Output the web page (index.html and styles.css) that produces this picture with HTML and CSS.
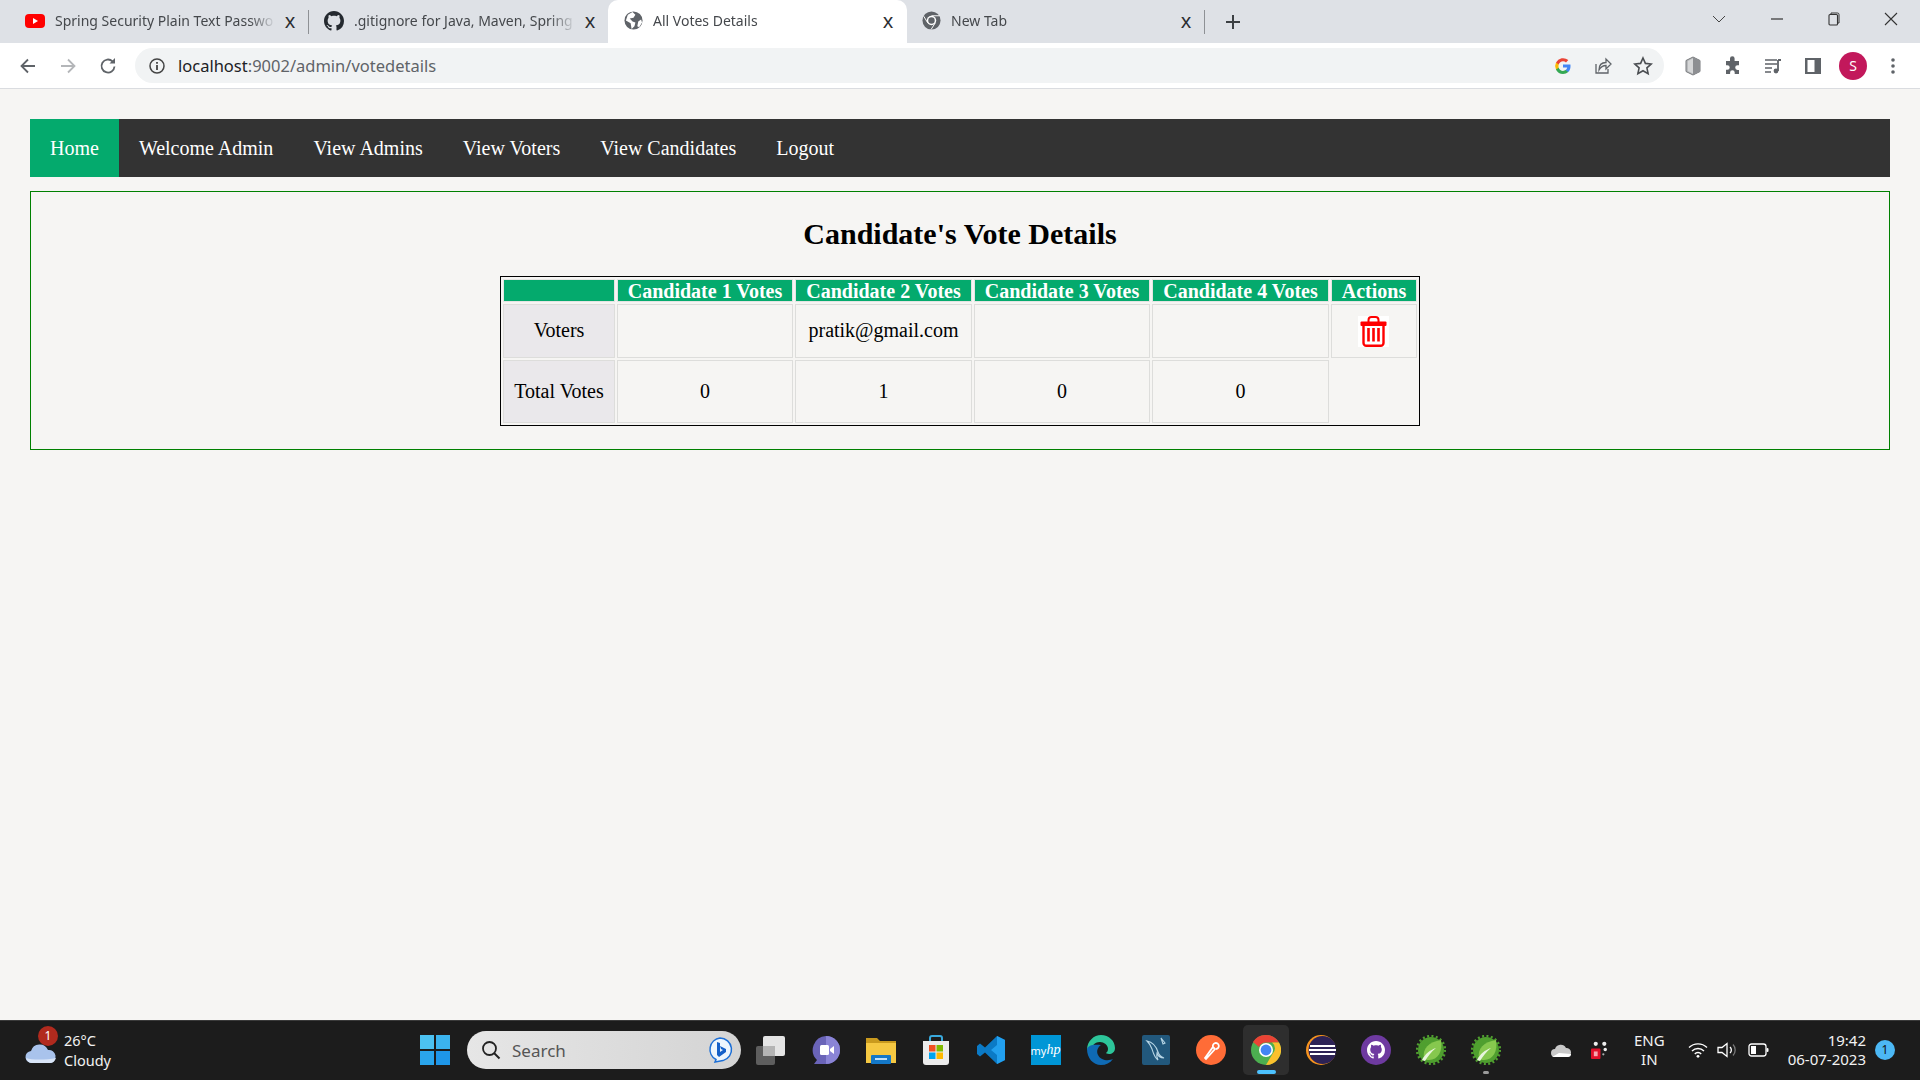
FILE: index.html
```html
<!DOCTYPE html>
<html lang="en">
<head>
<meta charset="UTF-8">
<title>All Votes Details</title>
<link rel="stylesheet" href="styles.css">
</head>
<body>
<svg class="defs" width="0" height="0">
    <defs>
        <path id="gh" d="M8 0C3.58 0 0 3.58 0 8c0 3.54 2.29 6.53 5.47 7.59.4.07.55-.17.55-.38 0-.19-.01-.82-.01-1.49-2.01.37-2.53-.49-2.69-.94-.09-.23-.48-.94-.82-1.13-.28-.15-.68-.52-.01-.53.63-.01 1.08.58 1.23.82.72 1.21 1.87.87 2.33.66.07-.52.28-.87.51-1.07-1.78-.2-3.64-.89-3.64-3.95 0-.87.31-1.59.82-2.15-.08-.2-.36-1.02.08-2.12 0 0 .67-.21 2.2.82.64-.18 1.32-.27 2-.27.68 0 1.36.09 2 .27 1.53-1.04 2.2-.82 2.2-.82.44 1.1.16 1.92.08 2.12.51.56.82 1.27.82 2.15 0 3.07-1.87 3.75-3.65 3.95.29.25.54.73.54 1.48 0 1.07-.01 1.93-.01 2.2 0 .21.15.46.55.38A8.013 8.013 0 0016 8c0-4.42-3.58-8-8-8z"/>
        <g id="spring">
            <circle cx="15" cy="15" r="13" fill="#4f9f2f"/>
            <circle cx="15" cy="15" r="14" fill="none" stroke="#4f9f2f" stroke-width="2.500" stroke-dasharray="2 2.400"/>
            <path d="M8 24C6 13 13 7 25 5c2 11-3 20-12 20-2 0-4-.4-5-1z" fill="#86c84e"/>
            <path d="M6 25c3-6 8-10 14-12-5 4-8 8-11 13z" fill="#e8f5dc"/>
        </g>
    </defs>
</svg>

<div class="tab-strip">
    <div class="tab">
        <svg class="favicon" viewBox="0 0 20 20"><rect y="3" width="20" height="14" rx="4" fill="#f00"/><path d="M8 7l5 3-5 3z" fill="#fff"/></svg>
        <span class="tab-title">Spring Security Plain Text Passwo</span>
        <span class="tab-close">x</span>
    </div>
    <div class="tab-sep"></div>
    <div class="tab">
        <svg class="favicon" viewBox="0 0 16 16" fill="#24292f"><use href="#gh"/></svg>
        <span class="tab-title">.gitignore for Java, Maven, Spring</span>
        <span class="tab-close">x</span>
    </div>
    <div class="tab tab-active">
        <svg class="favicon favicon-sm" viewBox="0 0 20 20"><circle cx="10" cy="10" r="9.5" fill="#5f6368"/><path d="M9 1l3 3-2 3-4 1 3 3 3 1-1 4-3 3-1-6-5-3 2-6zM15 11l3-2 1 3-3 5-2-1z" fill="#fff"/></svg>
        <span class="tab-title">All Votes Details</span>
        <span class="tab-close">x</span>
    </div>
    <div class="tab tab-new">
        <svg class="favicon favicon-sm" viewBox="0 0 20 20"><circle cx="10" cy="10" r="9.5" fill="#5f6368"/><circle cx="10" cy="10" r="5" fill="#fff"/><circle cx="10" cy="10" r="3.4" fill="#5f6368"/><path d="M10 5h8.5M6 12.5L1.8 5.5M14 12.5L9.5 19.5" stroke="#fff" stroke-width="1"/></svg>
        <span class="tab-title">New Tab</span>
        <span class="tab-close">x</span>
    </div>
    <div class="tab-sep"></div>
    <svg class="new-tab" viewBox="0 0 16 16"><path d="M8 1v14M1 8h14" stroke="#3c4043" stroke-width="2"/></svg>
    <div class="window-controls">
        <svg class="win-chevron" viewBox="0 0 14 8"><path d="M1 1l6 6 6-6" fill="none" stroke="#444" stroke-width="1"/></svg>
        <svg class="win-min" viewBox="0 0 12 12"><path d="M0 6h12" stroke="#333" stroke-width="1.2"/></svg>
        <svg class="win-max" viewBox="0 0 12 14"><path d="M3 2.500V1h6.500a1.500 1.500 0 0 1 1.500 1.500V11H9.500" fill="none" stroke="#333"/><rect x="1" y="2.500" width="8.500" height="10.500" rx="1" fill="none" stroke="#333" stroke-width="1.100"/></svg>
        <svg class="win-close" viewBox="0 0 14 14"><path d="M1 1l12 12M13 1L1 13" stroke="#333" stroke-width="1.100"/></svg>
    </div>
</div>

<div class="toolbar">
    <svg class="nav-btn" viewBox="0 0 20 20"><path d="M17 10H4M10 3.500L3.500 10l6.500 6.500" fill="none" stroke="#5f6368" stroke-width="1.800"/></svg>
    <svg class="nav-btn" viewBox="0 0 20 20"><path d="M3 10h13M10 3.500l6.500 6.500-6.500 6.500" fill="none" stroke="#b4b6b9" stroke-width="1.800"/></svg>
    <svg class="nav-btn" viewBox="0 0 20 20"><path d="M16.500 10.500a6.500 6.500 0 1 1-2-5.200" fill="none" stroke="#5f6368" stroke-width="1.800"/><path d="M17 2v5.500h-5.500z" fill="#5f6368"/></svg>
    <div class="omnibox">
        <svg class="info-icon" viewBox="0 0 16 16"><circle cx="8" cy="8" r="7" fill="none" stroke="#444" stroke-width="1.500"/><path d="M8 7v5M8 4v1.800" stroke="#444" stroke-width="1.800"/></svg>
        <span class="url"><span class="url-host">localhost</span>:9002/admin/votedetails</span>
        <div class="omni-actions">
            <svg class="tool-icon" viewBox="0 0 20 20"><path d="M17.500 10.200c0-.6 0-1.100-.1-1.600H10v3h4.200a3.600 3.600 0 0 1-1.600 2.400v2h2.600c1.500-1.400 2.300-3.400 2.300-5.800z" fill="#4285f4"/><path d="M10 18c2.100 0 3.900-.7 5.200-1.900l-2.600-2c-.7.500-1.600.8-2.600.8-2 0-3.700-1.400-4.300-3.200H3v2.100A8 8 0 0 0 10 18z" fill="#34a853"/><path d="M5.700 11.700a4.800 4.800 0 0 1 0-3.100V6.400H3a8 8 0 0 0 0 7.200z" fill="#fbbc05"/><path d="M10 5.200c1.200 0 2.200.4 3 1.200l2.300-2.300A8 8 0 0 0 3 6.400l2.700 2.200C6.300 6.700 8 5.200 10 5.200z" fill="#ea4335"/></svg>
            <svg class="tool-icon" viewBox="0 0 20 20"><path d="M3 8v9h12v-4" fill="none" stroke="#5f6368" stroke-width="1.300"/><path d="M6 14c0-5 3-7.500 7-7.500V3l5 5-5 5V9.500c-3 0-5 1-7 4.500z" fill="none" stroke="#5f6368" stroke-width="1.300"/></svg>
            <svg class="tool-icon" viewBox="0 0 20 20"><path d="M10 2l2.400 5.400 5.800.6-4.300 3.900 1.200 5.700L10 14.700l-5.100 2.900 1.200-5.700L1.800 8l5.800-.6z" fill="none" stroke="#4a4d51" stroke-width="1.600"/></svg>
        </div>
    </div>
    <div class="toolbar-actions">
        <svg class="tool-icon" viewBox="0 0 20 20"><path d="M10 1l7 3.500v11L10 19l-7-3.500v-11z" fill="#b9bbbd" stroke="#77797c"/><path d="M10 1v18l7-3.500v-11z" fill="#8d8f92"/><path d="M5 5l5-2.500v15L5 15z" fill="#d6d7d8"/></svg>
        <svg class="tool-icon" viewBox="0 0 20 20"><path d="M7 2.500a2.300 2.300 0 0 1 4.600 0V5H16v4.300h-1.500a2.300 2.300 0 0 0 0 4.600H16V18h-4.300v-1.500a2.300 2.300 0 0 0-4.600 0V18H3v-4.200h1.400a2.300 2.300 0 0 0 0-4.600H3V5h4z" fill="#5f6368"/></svg>
        <svg class="tool-icon" viewBox="0 0 20 20"><path d="M2 4h12M2 8h12M2 12h7M2 16h6" stroke="#5f6368" stroke-width="1.600"/><path d="M15 4h3M15 4v11" stroke="#5f6368" stroke-width="1.800" fill="none"/><circle cx="13" cy="15" r="2.400" fill="#5f6368"/></svg>
        <svg class="tool-icon" viewBox="0 0 20 20"><rect x="2" y="2" width="16" height="16" fill="#5f6368"/><rect x="4.500" y="4" width="7" height="12" fill="#fff"/></svg>
        <span class="avatar">S</span>
        <svg class="tool-icon" viewBox="0 0 20 20" fill="#5f6368"><circle cx="10" cy="4" r="1.800"/><circle cx="10" cy="10" r="1.800"/><circle cx="10" cy="16" r="1.800"/></svg>
    </div>
</div>

<div class="page">
    <ul class="topnav">
        <li class="active">Home</li>
        <li>Welcome Admin</li>
        <li>View Admins</li>
        <li>View Voters</li>
        <li>View Candidates</li>
        <li>Logout</li>
    </ul>
    <div class="content">
        <h2>Candidate's Vote Details</h2>
        <table class="votes">
            <colgroup>
                <col class="col-a"><col class="col-c"><col class="col-b"><col class="col-c"><col class="col-b"><col class="col-d">
            </colgroup>
            <tr class="head-row">
                <th></th>
                <th>Candidate 1 Votes</th>
                <th>Candidate 2 Votes</th>
                <th>Candidate 3 Votes</th>
                <th>Candidate 4 Votes</th>
                <th>Actions</th>
            </tr>
            <tr class="voter-row">
                <td class="row-label">Voters</td>
                <td></td>
                <td>pratik@gmail.com</td>
                <td></td>
                <td></td>
                <td>
                    <svg class="trash" viewBox="0 0 31 31">
                        <rect width="31" height="31" fill="#fff"/>
                        <path d="M10.500 6V4A3 3 0 0 1 13.500 1h4A3 3 0 0 1 20.500 4v2" fill="none" stroke="#f00" stroke-width="2"/>
                        <rect x="2.500" y="5.500" width="26" height="4.500" rx="1" fill="#f00"/>
                        <path d="M5.500 9v18A2.800 2.800 0 0 0 8.300 29.800h14.400a2.800 2.800 0 0 0 2.800-2.800V9" fill="none" stroke="#f00" stroke-width="2.400"/>
                        <path d="M10.500 12v13.500M15.500 12v13.500M20.500 12v13.500" stroke="#f00" stroke-width="2.600"/>
                    </svg>
                </td>
            </tr>
            <tr class="total-row">
                <td class="row-label">Total Votes</td>
                <td>0</td>
                <td>1</td>
                <td>0</td>
                <td>0</td>
            </tr>
        </table>
    </div>
</div>

<div class="taskbar">
    <div class="weather">
        <div class="weather-icon">
            <svg viewBox="0 0 32 20"><path d="M7 19a6 6 0 0 1-1-12 9 9 0 0 1 17-1 6.500 6.500 0 0 1 2 13z" fill="#a9c3ec"/><path d="M1 14c6 2 20 2 30 0-1 3-3 5-6 5H7c-3 0-5-2-6-5z" fill="#d9e5f7"/></svg>
            <span class="weather-badge">1</span>
        </div>
        <div class="weather-text">
            <span>26°C</span>
            <span>Cloudy</span>
        </div>
    </div>
    <div class="task-icons">
        <div class="task-item">
            <svg class="win-logo" viewBox="0 0 30 30"><rect width="14" height="14" fill="#4cc2f1"/><rect x="16" width="14" height="14" fill="#3bb4ee"/><rect y="16" width="14" height="14" fill="#2aa5ec"/><rect x="16" y="16" width="14" height="14" fill="#1e96e8"/></svg>
        </div>
        <div class="search-pill">
            <svg class="search-glass" viewBox="0 0 20 20"><circle cx="8.500" cy="8.500" r="6.500" fill="none" stroke="#222" stroke-width="1.800"/><path d="M13 13l5.500 5.500" stroke="#222" stroke-width="2"/></svg>
            <span class="search-text">Search</span>
            <svg class="bing" viewBox="0 0 26 26"><path d="M13 1a11.500 11.500 0 0 1 3 22.600L8 25l1-2.500A11.500 11.500 0 0 1 13 1z" fill="#eef6fd" stroke="#1d6fd6" stroke-width="1.500"/><path d="M10 5l3 1v9l3-2-2-1-1-3 6 3v3l-7 5-2-2z" fill="#1560c8"/></svg>
        </div>
        <div class="task-item">
            <svg class="task-svg" viewBox="0 0 30 30"><rect y="11" width="19" height="19" rx="2" fill="#5e5e5e"/><rect x="7" y="1" width="22" height="20" rx="2" fill="#e4e4e4"/><rect x="7" y="11" width="12" height="10" fill="#b4b4b4"/></svg>
        </div>
        <div class="task-item">
            <svg class="task-svg" viewBox="0 0 30 30"><path d="M15 1a14 14 0 0 1 0 28H3l3-4A14 14 0 0 1 15 1z" fill="#6a64b8"/><path d="M15 1a14 14 0 0 1 0 28z" fill="#8a84d6"/><rect x="9" y="10" width="9" height="10" rx="1.500" fill="#fff"/><path d="M19 14l4-3v8l-4-3z" fill="#fff"/></svg>
        </div>
        <div class="task-item">
            <svg class="task-svg" viewBox="0 0 30 30"><path d="M0 3h11l3 3h16v22H0z" fill="#c99a1e"/><rect y="8" width="30" height="20" fill="#f5c842"/><rect x="5" y="20" width="20" height="9" rx="1" fill="#1478c8"/><rect x="9" y="23" width="12" height="2" fill="#bfe0fa"/></svg>
        </div>
        <div class="task-item">
            <svg class="task-svg" viewBox="0 0 30 30"><path d="M9 6V3a2 2 0 0 1 2-2h8a2 2 0 0 1 2 2v3" fill="none" stroke="#39a9dc" stroke-width="2"/><path d="M2 6h26v21a3 3 0 0 1-3 3H5a3 3 0 0 1-3-3z" fill="#ececec"/><rect x="8" y="10" width="6.500" height="6.500" fill="#f25022"/><rect x="15.500" y="10" width="6.500" height="6.500" fill="#7fba00"/><rect x="8" y="17.500" width="6.500" height="6.500" fill="#00a4ef"/><rect x="15.500" y="17.500" width="6.500" height="6.500" fill="#ffb900"/></svg>
        </div>
        <div class="task-item">
            <svg class="task-svg" viewBox="0 0 30 30"><path d="M21 1l8 4v20l-8 4-12-11.500-5 4L1 19v-8l3-2.500 5 4z" fill="#0b7ac6"/><path d="M21 1l8 4v20l-8 4V20l-6-5 6-5z" fill="#22a0ef"/></svg>
        </div>
        <div class="task-item">
            <div class="myhp">my<i>hp</i></div>
        </div>
        <div class="task-item">
            <svg class="task-svg" viewBox="0 0 30 30"><path d="M1 15C1 6 8 0 15 0c8 0 14 6 14 13 0 4-3 6-6 6-2 0-3-1-3-1 1-1 2-2 2-4 0-4-4-7-8-7-6 0-9 5-9 8z" fill="#2dc59a"/><path d="M1 14c0 9 6 16 14 16 5 0 9-2 12-6-4 2-12 2-15-4-2-4 0-8 3-10C8 9 2 10 1 14z" fill="#0f6ab4"/></svg>
        </div>
        <div class="task-item">
            <svg class="task-svg" viewBox="0 0 30 30"><rect width="28" height="30" x="1" rx="2" fill="#22587c"/><path d="M6 6c5 1 9 5 11 11 1 3 3 5 6 6-4 0-6-2-7-5-1 3 0 5 1 7-4-3-5-8-6-11C10 11 8 8 6 6zM20 3l4 5-2 1z" fill="none" stroke="#b8d6e6" stroke-width="1.100"/></svg>
        </div>
        <div class="task-item">
            <svg class="task-svg" viewBox="0 0 30 30"><circle cx="15" cy="15" r="15" fill="#ff6c37"/><path d="M9 23l8-11 2 2-9 10zM17 12a3 3 0 1 1 3 2" fill="none" stroke="#fff" stroke-width="1.800"/></svg>
        </div>
        <div class="task-item task-running">
            <svg class="task-svg" viewBox="0 0 30 30"><circle cx="15" cy="15" r="15" fill="#4caf50"/><path d="M15 0a15 15 0 0 1 13 7.500H15A7.500 7.500 0 0 0 8 12L2 7a15 15 0 0 1 13-7z" fill="#ea4335"/><path d="M28 7.500A15 15 0 0 1 15 30l6.500-11A7.500 7.500 0 0 0 21 7.500z" fill="#fbc02d"/><circle cx="15" cy="15" r="7" fill="#fff"/><circle cx="15" cy="15" r="5.400" fill="#4285f4"/></svg>
            <span class="running-bar"></span>
        </div>
        <div class="task-item">
            <svg class="task-svg" viewBox="0 0 30 30"><circle cx="15" cy="15" r="15" fill="#f7941e"/><circle cx="16.500" cy="15" r="14" fill="#2c2255"/><path d="M4 11h25M3 15h27M4 19h25" stroke="#fff" stroke-width="2.200"/></svg>
        </div>
        <div class="task-item">
            <svg class="task-svg" viewBox="0 0 30 30"><circle cx="15" cy="15" r="15" fill="#6e3aa0"/><g transform="translate(6 6) scale(1.125)" fill="#fff"><use href="#gh"/></g></svg>
        </div>
        <div class="task-item">
            <svg class="task-svg" viewBox="0 0 30 30"><use href="#spring"/></svg>
        </div>
        <div class="task-item">
            <svg class="task-svg" viewBox="0 0 30 30"><use href="#spring"/></svg>
            <span class="open-dot"></span>
        </div>
    </div>
    <div class="tray">
        <svg class="tray-cloud" viewBox="0 0 20 13"><path d="M4 13a4 4 0 0 1 0-8 6 6 0 0 1 11-1 4.500 4.500 0 0 1 1 9z" fill="#c9c9c9"/><path d="M1 13l7-4 12 1c0 2-1 3-3 3z" fill="#fff"/></svg>
        <svg class="tray-app" viewBox="0 0 20 20"><rect x="0" y="8" width="10" height="11" rx="1" fill="#e0102a"/><rect x="3" y="11" width="4" height="5" fill="#f7a6b0"/><circle cx="5" cy="3" r="2.200" fill="#eee"/><circle cx="14" cy="3" r="2.200" fill="#eee"/><circle cx="15" cy="9" r="1.800" fill="#eee"/><circle cx="13" cy="14" r="1.200" fill="#aaa"/></svg>
        <div class="lang">
            <span>ENG</span>
            <span>IN</span>
        </div>
        <svg class="tray-wifi" viewBox="0 0 20 16"><path d="M1 5.500a13 13 0 0 1 18 0M4 9a8.500 8.500 0 0 1 12 0M6.800 12a4.200 4.200 0 0 1 6.400 0" fill="none" stroke="#fff" stroke-width="1.400"/><circle cx="10" cy="14.300" r="1.400" fill="#fff"/></svg>
        <svg class="tray-sound" viewBox="0 0 20 16"><path d="M1 5.500h4L10 1.500v13L5 10.500H1z" fill="none" stroke="#fff" stroke-width="1.300"/><path d="M13 5a4 4 0 0 1 0 6" fill="none" stroke="#fff" stroke-width="1.300"/><path d="M16 2.500a8 8 0 0 1 0 11" fill="none" stroke="#777" stroke-width="1.300"/></svg>
        <svg class="tray-battery" viewBox="0 0 21 14"><rect x="1" y="1" width="17" height="12" rx="2.500" fill="none" stroke="#fff" stroke-width="1.300"/><rect x="3" y="3" width="5" height="8" fill="#fff"/><rect x="18.500" y="5" width="2" height="4" rx="1" fill="#fff"/></svg>
        <div class="clock">
            <span>19:42</span>
            <span>06-07-2023</span>
        </div>
        <span class="notify">1</span>
    </div>
</div>
</body>
</html>
```

FILE: styles.css
```css
html, body {
    margin: 0;
    padding: 0;
    height: 100%;
}
body {
    display: flex;
    flex-direction: column;
    height: 1080px;
    overflow: hidden;
    background-color: #f6f5f3;
    font-family: "Liberation Serif", "Times New Roman", serif;
}
.defs {
    display: none;
}

/* browser tabs */
.tab-strip {
    display: flex;
    align-items: center;
    height: 43px;
    flex-shrink: 0;
    padding-left: 8px;
    background-color: #dee1e6;
    font-family: "Noto Sans", sans-serif;
}
.tab {
    display: flex;
    align-items: center;
    width: 300px;
    height: 43px;
    box-sizing: border-box;
    padding: 0 10px 2px 17px;
    color: #45484c;
    font-size: 14px;
}
.tab-sep + .tab {
    padding-left: 16px;
}
.tab-active {
    width: 299px;
    padding: 0 11px 2px 16px;
    background-color: #fff;
    border-radius: 10px 10px 0 0;
}
.tab-new {
    width: 297px;
    padding-left: 15px;
}
.tab-sep {
    width: 1px;
    height: 24px;
    margin: 0 -1px 0 0;
    background-color: #8e9195;
}
.favicon {
    width: 20px;
    height: 20px;
    flex-shrink: 0;
    margin-right: 10px;
}
.favicon-sm {
    width: 19px;
    height: 19px;
}
.tab-title {
    flex: 1;
    overflow: hidden;
    white-space: nowrap;
    -webkit-mask-image: linear-gradient(to right, #000 88%, transparent 100%);
    mask-image: linear-gradient(to right, #000 88%, transparent 100%);
}
.tab-close {
    width: 16px;
    margin-left: 6px;
    color: #2c2e31;
    font-size: 20px;
    line-height: 18px;
    text-align: center;
}
.new-tab {
    width: 16px;
    height: 16px;
    margin-left: 21px;
}
.window-controls {
    display: flex;
    align-items: center;
    margin-left: auto;
    height: 43px;
}
.win-chevron {
    width: 14px;
    height: 8px;
    margin: 0 45px 6px 0;
}
.win-min {
    width: 12px;
    height: 12px;
    margin: 0 45px 6px 0;
}
.win-max {
    width: 12px;
    height: 14px;
    margin: 0 44px 6px 0;
}
.win-close {
    width: 14px;
    height: 14px;
    margin: 0 22px 6px 0;
}

/* address bar */
.toolbar {
    display: flex;
    align-items: center;
    height: 45px;
    flex-shrink: 0;
    padding-left: 18px;
    background-color: #fff;
    border-bottom: 1px solid #dadce0;
}
.nav-btn {
    width: 20px;
    height: 20px;
    margin-right: 20px;
}
.nav-btn:nth-child(3) {
    margin-right: 17px;
}
.omnibox {
    display: flex;
    align-items: center;
    width: 1529px;
    height: 35px;
    box-sizing: border-box;
    padding: 0 11px 0 14px;
    background-color: #f1f3f4;
    border-radius: 18px;
    font-family: "Noto Sans", sans-serif;
}
.info-icon {
    width: 16px;
    height: 16px;
    margin-right: 13px;
}
.url {
    color: #5f6368;
    font-size: 16.5px;
}
.url-host {
    color: #202124;
}
.omni-actions {
    display: flex;
    align-items: center;
    gap: 20px;
    margin-left: auto;
}
.tool-icon {
    width: 20px;
    height: 20px;
}
.toolbar-actions {
    display: flex;
    align-items: center;
    gap: 20px;
    margin-left: 19px;
}
.avatar {
    display: flex;
    align-items: center;
    justify-content: center;
    width: 28px;
    height: 28px;
    margin: 0 -4px;
    border-radius: 50%;
    background-color: #c2185b;
    color: #fff;
    font-family: "Noto Sans", sans-serif;
    font-size: 14px;
}

/* page content */
.page {
    flex: 1;
    padding: 30px 30px 0;
}
.topnav {
    display: flex;
    margin: 0;
    padding: 0;
    list-style: none;
    background-color: #333;
}
.topnav li {
    padding: 18px 20px 17px;
    color: #fff;
    font-size: 20px;
    line-height: 23px;
}
.topnav li.active {
    background-color: #04aa6d;
}
.content {
    height: 259px;
    box-sizing: border-box;
    margin-top: 14px;
    padding-top: 24px;
    border: 1px solid green;
}
.content h2 {
    margin: 0 0 25px;
    color: #000;
    font-size: 30px;
    line-height: 35px;
    text-align: center;
}
.votes {
    width: 920px;
    margin: 0 auto;
    table-layout: fixed;
    border: 1px solid #000;
    border-spacing: 2px;
    font-size: 20px;
}
.col-a { width: 112px; }
.col-b { width: 177px; }
.col-c { width: 176px; }
.col-d { width: 86px; }
.votes th {
    height: 23px;
    box-sizing: border-box;
    padding: 1px 0 0;
    border: 1px solid #e4e4e2;
    background-color: #04aa6d;
    color: #fff;
    line-height: 20px;
}
.votes td {
    box-sizing: border-box;
    padding: 0;
    border: 1px solid #dddddb;
    color: #000;
    text-align: center;
}
.voter-row td {
    height: 54px;
    padding-bottom: 1px;
}
.total-row td {
    height: 63px;
}
.votes .row-label {
    background-color: #eae8eb;
}
.trash {
    display: block;
    width: 31px;
    height: 31px;
    margin: 1px auto 0;
    position: relative;
    left: -1px;
}

/* windows taskbar */
.taskbar {
    display: flex;
    align-items: center;
    height: 60px;
    flex-shrink: 0;
    box-sizing: border-box;
    padding-bottom: 1px;
    border-top: 1px solid #3a3a3a;
    background-color: #1c1c1c;
    color: #f2f2f2;
    font-family: "Noto Sans", sans-serif;
}
.weather {
    display: flex;
    align-items: center;
    width: 407px;
    flex-shrink: 0;
    box-sizing: border-box;
    padding-left: 25px;
}
.weather-icon {
    position: relative;
    width: 32px;
    height: 20px;
    margin: 8px 7px 0 0;
}
.weather-icon svg {
    display: block;
    width: 32px;
    height: 20px;
}
.weather-badge {
    position: absolute;
    top: -18px;
    left: 13px;
    width: 20px;
    height: 20px;
    border-radius: 50%;
    background-color: #b12a1e;
    color: #fff;
    font-size: 12px;
    line-height: 20px;
    text-align: center;
}
.weather-text {
    display: flex;
    flex-direction: column;
    font-size: 14.5px;
    line-height: 20px;
}
.task-icons {
    display: flex;
    align-items: center;
}
.task-item {
    position: relative;
    display: flex;
    align-items: center;
    justify-content: center;
    width: 55px;
    height: 50px;
}
.win-logo, .task-svg {
    width: 30px;
    height: 30px;
}
.search-pill {
    display: flex;
    align-items: center;
    width: 274px;
    height: 38px;
    box-sizing: border-box;
    margin: 0 2px 0 5px;
    padding: 0 8px 0 14px;
    border-radius: 19px;
    background: linear-gradient(to right, #e6e6e6, #d4d4d4);
    color: #555;
    font-size: 17px;
}
.search-glass {
    width: 20px;
    height: 20px;
    margin-right: 11px;
}
.bing {
    width: 26px;
    height: 26px;
    margin-left: auto;
}
.myhp {
    display: flex;
    align-items: center;
    justify-content: center;
    width: 30px;
    height: 30px;
    background-color: #0096d6;
    color: #fff;
    font-size: 11px;
}
.myhp i {
    font-family: "Liberation Serif", serif;
    font-size: 14px;
}
.task-running {
    background-color: #2e2e2e;
    border-radius: 5px;
    width: 46px;
    margin: 0 4.500px;
}
.running-bar {
    position: absolute;
    left: 14px;
    bottom: 1px;
    width: 19px;
    height: 4px;
    border-radius: 2px;
    background-color: #4cc2ff;
}
.open-dot {
    position: absolute;
    left: 25px;
    bottom: 1px;
    width: 6px;
    height: 3px;
    border-radius: 2px;
    background-color: #9a9a9a;
}
.tray {
    display: flex;
    align-items: center;
    margin-left: auto;
    font-size: 15px;
}
.tray-cloud {
    width: 20px;
    height: 13px;
    margin-right: 20px;
}
.tray-app {
    width: 19px;
    height: 19px;
    margin-right: 24px;
}
.lang {
    display: flex;
    flex-direction: column;
    align-items: center;
    margin-right: 23px;
    line-height: 19px;
}
.tray-wifi {
    width: 20px;
    height: 16px;
    margin-right: 9px;
}
.tray-sound {
    width: 20px;
    height: 16px;
    margin-right: 11px;
}
.tray-battery {
    width: 21px;
    height: 14px;
    margin-right: 19px;
}
.clock {
    display: flex;
    flex-direction: column;
    align-items: flex-end;
    margin-right: 54px;
    line-height: 19px;
}
.notify {
    position: absolute;
    right: 25px;
    width: 20px;
    height: 20px;
    border-radius: 50%;
    background-color: #4cb8f5;
    color: #111;
    font-size: 12px;
    line-height: 20px;
    text-align: center;
}
```
